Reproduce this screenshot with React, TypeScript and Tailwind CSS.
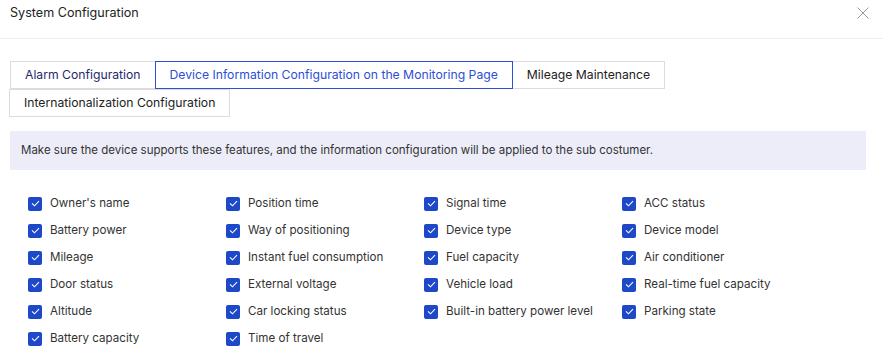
import { useState } from 'react';

const tabs = [
  'Alarm Configuration',
  'Device Information Configuration on the Monitoring Page',
  'Mileage Maintenance',
  'Internationalization Configuration',
];

const columns = [
  ["Owner's name", 'Battery power', 'Mileage', 'Door status', 'Altitude', 'Battery capacity'],
  ['Position time', 'Way of positioning', 'Instant fuel consumption', 'External voltage', 'Car locking status', 'Time of travel'],
  ['Signal time', 'Device type', 'Fuel capacity', 'Vehicle load', 'Built-in battery power level'],
  ['ACC status', 'Device model', 'Air conditioner', 'Real-time fuel capacity', 'Parking state'],
];

function Check({ label }: { label: string }) {
  const [on, setOn] = useState(true);
  return (
    <label className="flex items-center h-[27px] cursor-pointer select-none" onClick={() => setOn(!on)}>
      <span
        className={`w-[14px] h-[14px] rounded-[2px] flex items-center justify-center shrink-0 ${
          on ? 'bg-[#1d49c9]' : 'bg-white border border-[#c9c9c9]'
        }`}
      >
        {on && (
          <svg width="9" height="7" viewBox="0 0 9 7" fill="none">
            <path d="M1 3.4 L3.5 5.8 L8 1.2" stroke="white" strokeWidth="1.1" />
          </svg>
        )}
      </span>
      <span className="ml-[8px] text-[11.6px] text-[#333]">{label}</span>
    </label>
  );
}

export default function App() {
  const [active, setActive] = useState(1);

  return (
    <div className="w-[883px] h-[361px] bg-white overflow-hidden font-['Inter',sans-serif]">
      {/* Header */}
      <div className="h-[39px] border-b border-[#eeeeee] flex items-start justify-between pl-[10px] pr-[14px] pt-[4px]">
        <span className="text-[12.6px] leading-[18px] text-[#222]">System Configuration</span>
        <svg width="12" height="12" viewBox="0 0 12 12" className="mt-[3px]">
          <path d="M0.5 0.5 L11.5 11.5 M11.5 0.5 L0.5 11.5" stroke="#9a9a9a" strokeWidth="1" />
        </svg>
      </div>

      {/* Tabs */}
      <div className="mt-[22px] pl-[10px] pr-[200px] flex flex-wrap">
        {tabs.map((t, i) => (
          <button
            key={t}
            onClick={() => setActive(i)}
            className={`h-[28px] px-[14px] text-[12.2px] border -ml-px first:ml-0 ${
              active === i
                ? 'border-[#2b4fd6] text-[#2b4fd6] relative z-10'
                : i === 0
                ? 'border-[#dcdcdc] text-[#1f2a6b]'
                : 'border-[#dcdcdc] text-[#222]'
            }`}
          >
            {t}
          </button>
        ))}
      </div>

      {/* Notice */}
      <div className="mt-[14px] ml-[10px] w-[856px] h-[39px] bg-[#ededfa] flex items-center px-[11px] text-[11.5px] text-[#333]">
        Make sure the device supports these features, and the information configuration will be applied to the sub costumer.
      </div>

      {/* Options */}
      <div className="mt-[20px] pl-[28px] grid grid-cols-[198px_198px_198px_198px]">
        {columns.map((col, ci) => (
          <div key={ci} className="flex flex-col">
            {col.map((label) => (
              <Check key={label} label={label} />
            ))}
          </div>
        ))}
      </div>
    </div>
  );
}
